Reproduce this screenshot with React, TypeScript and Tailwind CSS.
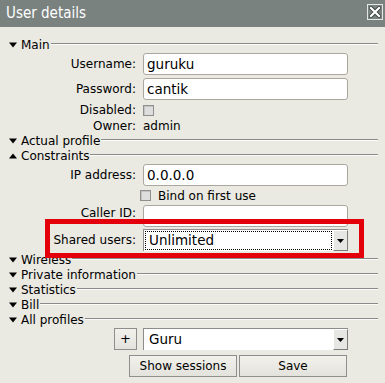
import React from 'react';

const Tri: React.FC<{ up?: boolean }> = ({ up }) => (
  <svg width="8" height="6" viewBox="0 0 8 6" className="shrink-0">
    <path d={up ? 'M0 5.5 L4 0.5 L8 5.5 Z' : 'M0 0.5 L8 0.5 L4 5.5 Z'} fill="#000" />
  </svg>
);

const Section: React.FC<{ title: string; up?: boolean }> = ({ title, up }) => (
  <div className="flex h-[15px] items-center pl-[9px] pr-[7px]">
    <Tri up={up} />
    <span className="ml-[4px] whitespace-nowrap leading-none">{title}</span>
    <div className="mb-[2px] ml-[1px] h-0 flex-1 border-t border-b border-t-[#8a8a8a] border-b-[#fbfbf8]" />
  </div>
);

const Row: React.FC<{ label?: string; className?: string; labelClass?: string; children: React.ReactNode }> = ({
  label,
  className = '',
  labelClass = '',
  children,
}) => (
  <div className={`flex items-center ${className}`}>
    <div className={`w-[137px] shrink-0 whitespace-nowrap pr-[1px] text-right ${labelClass}`}>{label}</div>
    <div className="ml-[6px] flex items-center">{children}</div>
  </div>
);

const Field: React.FC<{ value?: string }> = ({ value }) => (
  <div className="h-[22px] w-[205px] rounded-[3px] border border-[#aba79e] bg-white pl-[3px] text-[13.5px] leading-[20px]">
    {value}
  </div>
);

const Check: React.FC = () => (
  <div className="h-[11px] w-[11px] border border-[#8f8f8f] bg-[#dedede] shadow-[inset_1px_1px_0_#c4c4c4]" />
);

const Select: React.FC<{ value: string; focused?: boolean }> = ({ value, focused }) => (
  <div className="flex h-[22px] w-[205px] border-t border-l border-t-[#8c8c8c] border-l-[#8c8c8c] bg-white">
    <div className="flex flex-1 p-[1px]">
      <div
        className={`flex-1 pl-[3px] text-[13.5px] leading-[17px] ${
          focused ? 'border border-dotted border-black' : 'border border-transparent'
        }`}
      >
        {value}
      </div>
    </div>
    <div className="flex w-[15px] items-center justify-center border-t border-l border-r border-b border-t-white border-l-white border-r-[#7d7d7d] border-b-[#7d7d7d] bg-[#e6e6e2]">
      <svg width="7" height="4" viewBox="0 0 7 4">
        <path d="M0 0 L7 0 L3.5 4 Z" fill="#000" />
      </svg>
    </div>
  </div>
);

const Button: React.FC<{ children: React.ReactNode; className?: string }> = ({ children, className = '' }) => (
  <div
    className={`flex h-[22px] items-center justify-center border border-[#8e8e8e] bg-gradient-to-b from-[#f2f1ec] to-[#e3e2dc] ${className}`}
  >
    {children}
  </div>
);

export default function App() {
  return (
    <div className="relative h-[383px] w-[385px] overflow-hidden bg-[#eae9e2] font-['DejaVu_Sans',sans-serif] text-[12px] text-black">
      {/* Title bar */}
      <div className="flex h-[27px] items-center justify-between bg-[#7a8280] pl-[6px] pr-[2px]">
        <span className="font-['DejaVu_Sans_Condensed','Liberation_Sans',sans-serif] text-[15px] text-white">
          User details
        </span>
        <div className="mb-[3px] flex h-[16px] w-[16px] items-center justify-center border border-[#e4e6e5]">
          <svg width="12" height="12" viewBox="0 0 12 12">
            <path d="M2 2 L10 10 M10 2 L2 10" stroke="#3c4240" strokeWidth="4" strokeLinecap="square" />
            <path d="M2 2 L10 10 M10 2 L2 10" stroke="#fff" strokeWidth="2.2" strokeLinecap="square" />
          </svg>
        </div>
      </div>

      <div className="flex flex-col pt-[10px]">
        <Section title="Main" />
        <Row label="Username:" className="mt-[1px]">
          <Field value="guruku" />
        </Row>
        <Row label="Password:" className="mt-[3px]">
          <Field value="cantik" />
        </Row>
        <Row label="Disabled:" className="mt-[1px] h-[18px]">
          <Check />
        </Row>
        <Row label="Owner:" className="h-[14px]">
          <span>admin</span>
        </Row>
        <Section title="Actual profile" />
        <Section title="Constraints" up />
        <Row label="IP address:" className="mt-[1px]">
          <Field value="0.0.0.0" />
        </Row>
        <div className="flex h-[19px] items-center pl-[140px]">
          <Check />
          <span className="ml-[7px]">Bind on first use</span>
        </div>
        <Row label="Caller ID:" labelClass="-mt-[7px]">
          <Field />
        </Row>
        <Row label="Shared users:" className="mt-[2px]">
          <Select value="Unlimited" focused />
        </Row>
        <div className="mt-[1px]">
          <Section title="Wireless" />
          <Section title="Private information" />
          <Section title="Statistics" />
          <Section title="Bill" />
          <Section title="All profiles" />
        </div>
        <div className="mt-[1px] flex items-center pl-[114px]">
          <Button className="h-[21px] w-[23px] text-[13px]">+</Button>
          <div className="ml-[6px]">
            <Select value="Guru" />
          </div>
        </div>
        <div className="mt-[5px] flex gap-[2px] pl-[129px]">
          <Button className="w-[108px]">Show sessions</Button>
          <Button className="w-[108px]">Save</Button>
        </div>
      </div>

      {/* Red highlight annotation */}
      <div className="absolute left-[45px] top-[219px] h-[39px] w-[319px] border-[5px] border-[#e4000a]" />
    </div>
  );
}
